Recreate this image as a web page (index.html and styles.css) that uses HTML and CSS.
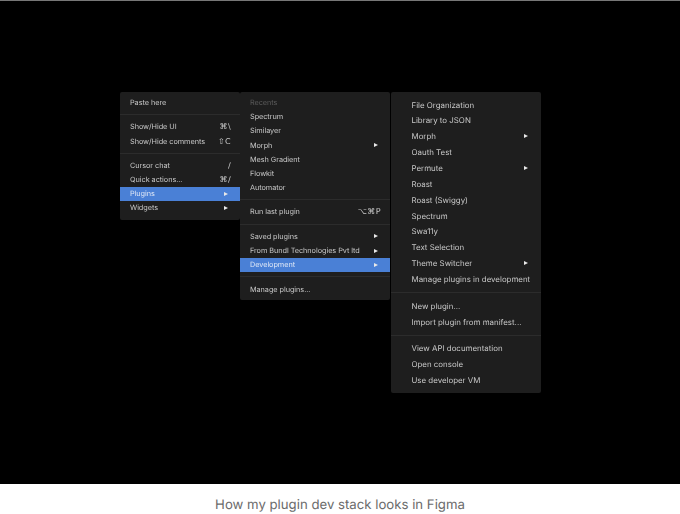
FILE: index.html
```html
<!DOCTYPE html>
<html lang="en">

<head>
    <meta charset="UTF-8">
    <meta name="viewport" content="width=device-width, initial-scale=1.0">
    <title>How my plugin dev stack looks in Figma</title>
    <link rel="stylesheet" href="styles.css">
</head>

<body>
    <div class="stage">
        <div class="menus">
            <div class="menu menu-main">
                <div class="row"><span>Paste here</span></div>
                <div class="sep"></div>
                <div class="row"><span>Show/Hide UI</span><span class="keys">⌘\</span></div>
                <div class="row"><span>Show/Hide comments</span><span class="keys">⇧C</span></div>
                <div class="sep"></div>
                <div class="row"><span>Cursor chat</span><span class="keys">/</span></div>
                <div class="row"><span>Quick actions...</span><span class="keys">⌘/</span></div>
                <div class="row active"><span>Plugins</span><i class="arrow"></i></div>
                <div class="row"><span>Widgets</span><i class="arrow"></i></div>
            </div>
            <div class="menu menu-plugins">
                <div class="row muted"><span>Recents</span></div>
                <div class="row"><span>Spectrum</span></div>
                <div class="row"><span>Similayer</span></div>
                <div class="row"><span>Morph</span><i class="arrow"></i></div>
                <div class="row"><span>Mesh Gradient</span></div>
                <div class="row"><span>Flowkit</span></div>
                <div class="row"><span>Automator</span></div>
                <div class="sep"></div>
                <div class="row"><span>Run last plugin</span><span class="keys">⌥⌘P</span></div>
                <div class="sep"></div>
                <div class="row"><span>Saved plugins</span><i class="arrow"></i></div>
                <div class="row"><span>From Bundl Technologies Pvt ltd</span><i class="arrow"></i></div>
                <div class="row active"><span>Development</span><i class="arrow"></i></div>
                <div class="sep"></div>
                <div class="row"><span>Manage plugins...</span></div>
            </div>
            <div class="menu menu-dev">
                <div class="row"><span>File Organization</span></div>
                <div class="row"><span>Library to JSON</span></div>
                <div class="row"><span>Morph</span><i class="arrow"></i></div>
                <div class="row"><span>Oauth Test</span></div>
                <div class="row"><span>Permute</span><i class="arrow"></i></div>
                <div class="row"><span>Roast</span></div>
                <div class="row"><span>Roast (Swiggy)</span></div>
                <div class="row"><span>Spectrum</span></div>
                <div class="row"><span>Swa11y</span></div>
                <div class="row"><span>Text Selection</span></div>
                <div class="row"><span>Theme Switcher</span><i class="arrow"></i></div>
                <div class="row"><span>Manage plugins in development</span></div>
                <div class="sep"></div>
                <div class="row"><span>New plugin...</span></div>
                <div class="row"><span>Import plugin from manifest...</span></div>
                <div class="sep"></div>
                <div class="row"><span>View API documentation</span></div>
                <div class="row"><span>Open console</span></div>
                <div class="row"><span>Use developer VM</span></div>
            </div>
        </div>
    </div>
    <p class="caption">How my plugin dev stack looks in Figma</p>
</body>

</html>
```

FILE: styles.css
```css
* {
    margin: 0;
    padding: 0;
    box-sizing: border-box;
}

body {
    width: 680px;
    height: 514px;
    overflow: hidden;
    background-color: #fff;
    font-family: "Inter", "Liberation Sans", sans-serif;
    text-rendering: geometricPrecision;
}

.stage {
    height: 484px;
    padding: 91px 0 0 120px;
    background-color: #000;
    border-top: 1px solid #777;
}

.menus {
    display: flex;
    align-items: flex-start;
    filter: blur(0.35px);
}

.menu {
    width: 150px;
    padding: 3.4px 0 4.5px;
    background-color: #1e1e1e;
    border-radius: 2px;
    color: #c8c8c8;
    font-size: 7.3px;
    letter-spacing: -0.05px;
}

.menu-main {
    width: 120px;
    height: 128px;
}

.menu-plugins {
    height: 208px;
}

.menu-dev {
    height: 301px;
    margin-left: 1px;
    padding-top: 4.7px;
    font-size: 7.9px;
    letter-spacing: 0;
}

.row {
    display: flex;
    justify-content: space-between;
    align-items: center;
    height: 14.2px;
    padding: 0 9px 0 10px;
    white-space: nowrap;
}

.menu-dev .row {
    height: 15.85px;
    padding: 0 10px 0 20.5px;
}

.active {
    background-color: #4a80d6;
    color: #dfe7f6;
}

.muted {
    color: #5a5a5a;
}

.keys {
    font-family: "DejaVu Sans", sans-serif;
    font-size: 8px;
    letter-spacing: 0.4px;
}

.arrow {
    width: 0;
    height: 0;
    margin-right: 3px;
    border-left: 4px solid #e8e8e8;
    border-top: 2.6px solid transparent;
    border-bottom: 2.6px solid transparent;
}

.sep {
    height: 1px;
    margin: 4.6px 0;
    background-color: #2c2c2c;
}

.menu-dev .sep {
    margin: 5px 0;
}

.caption {
    height: 30px;
    line-height: 42px;
    text-align: center;
    color: #6b6b6b;
    font-size: 13.2px;
}
```
